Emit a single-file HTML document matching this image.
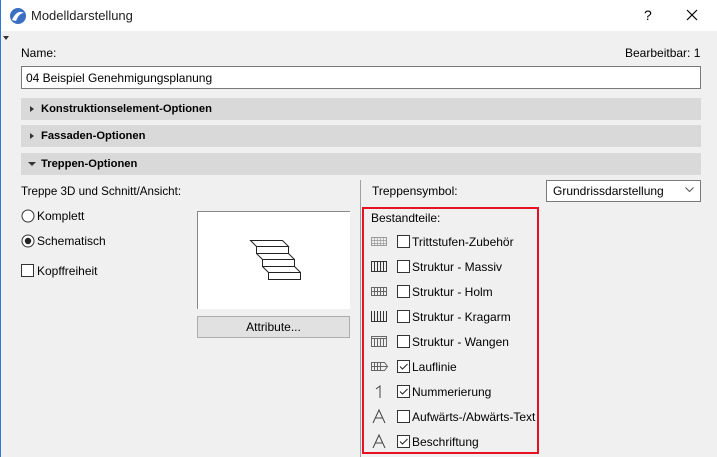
<!DOCTYPE html>
<html><head><meta charset="utf-8"><style>
*{margin:0;padding:0;box-sizing:border-box}
body{width:717px;height:457px;overflow:hidden;background:#f0f0f0;font-family:"Liberation Sans",sans-serif;font-size:12px;color:#000;position:relative}
.a{position:absolute;white-space:nowrap}
.bar{position:absolute;left:21px;width:680px;height:22px;background:#d9d9d9;font-weight:bold;font-size:11.2px;line-height:22px;padding-left:20px}
.cb{position:absolute;width:13px;height:13px;border:1px solid #333;background:#fff}
</style></head><body>
<div class="a" style="left:0;top:0;width:717px;height:31px;background:#fff"></div>
<div class="a" style="left:0;top:0;width:1px;height:457px;background:#2b7bd6"></div>
<svg class="a" style="left:9px;top:7px" width="18" height="18"><circle cx="9" cy="9" r="8" fill="#3a6fc4"/><path d="M3 13 Q8 2 15 6 Q10 6 7 14Z" fill="#fff"/></svg>
<div class="a" style="left:31px;top:8px;font-size:13px;color:#222">Modelldarstellung</div>
<div class="a" style="left:644px;top:7px;font-size:14px">?</div>
<svg class="a" style="left:686px;top:9px" width="12" height="12"><path d="M1 1L11 11M11 1L1 11" stroke="#000" stroke-width="1.2"/></svg>
<div class="a" style="left:3px;top:36px;width:0;height:0;border-left:3px solid transparent;border-right:3px solid transparent;border-top:4px solid #333"></div>
<div class="a" style="left:21px;top:46px">Name:</div>
<div class="a" style="left:625px;top:46px">Bearbeitbar: 1</div>
<div class="a" style="left:21px;top:66px;width:680px;height:23px;background:#fff;border:1px solid #7a7a7a;padding:4px 0 0 4px">04 Beispiel Genehmigungsplanung</div>
<div class="bar" style="top:98px">Konstruktionselement-Optionen</div>
<div class="bar" style="top:125px">Fassaden-Optionen</div>
<div class="bar" style="top:153px">Treppen-Optionen</div>
<div class="a" style="left:30px;top:106px;border-top:3.5px solid transparent;border-bottom:3.5px solid transparent;border-left:4px solid #333"></div>
<div class="a" style="left:30px;top:133px;border-top:3.5px solid transparent;border-bottom:3.5px solid transparent;border-left:4px solid #333"></div>
<div class="a" style="left:28px;top:162px;border-left:4px solid transparent;border-right:4px solid transparent;border-top:4px solid #333"></div>
<div class="a" style="left:21px;top:185px;font-size:11.6px">Treppe 3D und Schnitt/Ansicht:</div>
<svg class="a" style="left:21px;top:209px" width="14" height="14"><circle cx="7" cy="7" r="6" fill="#fff" stroke="#333"/></svg>
<div class="a" style="left:37px;top:209px">Komplett</div>
<svg class="a" style="left:21px;top:234px" width="14" height="14"><circle cx="7" cy="7" r="6" fill="#fff" stroke="#333"/><circle cx="7" cy="7" r="3.2" fill="#222"/></svg>
<div class="a" style="left:37px;top:234px">Schematisch</div>
<div class="cb" style="left:21px;top:264px"></div>
<div class="a" style="left:37px;top:264px">Kopffreiheit</div>
<div class="a" style="left:197px;top:211px;width:153px;height:98px;background:#fff;border-top:1px solid #888;border-left:1px solid #888"></div>
<svg class="a" style="left:245px;top:235px" width="60" height="46"><g fill="none" stroke="#222" stroke-width="1"><path d="M5.5 5.5H37.5L43.5 11.5H11.5ZM11.5 11.5V18.5H43.5V11.5M11.5 18.5L17.5 24.5V31.5H49.5V24.5L43.5 18.5M17.5 24.5H49.5M17.5 31.5L23.5 37.5V44.5H55.5V37.5L49.5 31.5M23.5 37.5H55.5"/></g></svg>
<div class="a" style="left:197px;top:316px;width:153px;height:22px;background:#e1e1e1;border:1px solid #adadad;text-align:center;line-height:20px">Attribute...</div>
<div class="a" style="left:360px;top:180px;width:1px;height:277px;background:#a0a0a0"></div>
<div class="a" style="left:372px;top:184px">Treppensymbol:</div>
<div class="a" style="left:546px;top:180px;width:155px;height:22px;background:#fff;border:1px solid #7a7a7a;padding:3px 0 0 6px">Grundrissdarstellung</div>
<svg class="a" style="left:685px;top:187px" width="9" height="6"><path d="M0.5 0.5L4.5 4.5L8.5 0.5" fill="none" stroke="#555"/></svg>
<div class="a" style="left:362px;top:207px;width:177px;height:247px;border:2px solid #e81123"></div>
<div class="a" style="left:371px;top:211px">Bestandteile:</div>
<svg class="a" style="left:371px;top:232px" width="18" height="220" fill="none" stroke="#333" stroke-width="1">
<g stroke="#999"><rect x="0.5" y="5.5" width="15" height="8"/><path d="M3.5 5v9M6.5 5v9M9.5 5v9M12.5 5v9M0 8.5h16M0 11.5h16" stroke-width="0.7"/></g>
<g transform="translate(0,25)"><rect x="0.5" y="4.5" width="15" height="10"/><path d="M3.5 4v11M6.5 4v11M9.5 4v11M12.5 4v11"/></g>
<g transform="translate(0,50)" stroke="#666"><rect x="0.5" y="5.5" width="15" height="8"/><path d="M3.5 5v9M6.5 5v9M9.5 5v9M12.5 5v9M0 9.5h16"/></g>
<g transform="translate(0,75)"><path d="M0.5 4v10.5h15V4M3.5 4v11M6.5 4v11M9.5 4v11M12.5 4v11"/></g>
<g transform="translate(0,100)" stroke="#666"><rect x="0.5" y="4.5" width="15" height="10"/><path d="M0 6.5h16M3.5 6v8M6.5 6v8M9.5 6v8M12.5 6v8"/></g>
<g transform="translate(0,125)" stroke="#666"><path d="M0.5 5.5h13l3 4-3 4h-13zM3.5 5v9M6.5 5v9M9.5 5v9M0 9.5h16"/></g>
<g transform="translate(0,150)" stroke="#444"><path d="M5 7l4-3v12"/></g>
<g transform="translate(0,175)" stroke="#444"><path d="M2 16L8 3l6 13M4.5 11h7"/></g>
<g transform="translate(0,200)" stroke="#444"><path d="M2 16L8 3l6 13M4.5 11h7"/></g>
</svg>
<div class="cb" style="left:397px;top:235px"></div><div class="a" style="left:412px;top:235px">Trittstufen-Zubehör</div>
<div class="cb" style="left:397px;top:260px"></div><div class="a" style="left:412px;top:260px">Struktur - Massiv</div>
<div class="cb" style="left:397px;top:285px"></div><div class="a" style="left:412px;top:285px">Struktur - Holm</div>
<div class="cb" style="left:397px;top:310px"></div><div class="a" style="left:412px;top:310px">Struktur - Kragarm</div>
<div class="cb" style="left:397px;top:335px"></div><div class="a" style="left:412px;top:335px">Struktur - Wangen</div>
<div class="cb" style="left:397px;top:360px"><svg width="11" height="11" style="display:block"><path d="M2 5.5l2.5 2.5L9.5 3" fill="none" stroke="#222"/></svg></div><div class="a" style="left:412px;top:360px">Lauflinie</div>
<div class="cb" style="left:397px;top:385px"><svg width="11" height="11" style="display:block"><path d="M2 5.5l2.5 2.5L9.5 3" fill="none" stroke="#222"/></svg></div><div class="a" style="left:412px;top:385px">Nummerierung</div>
<div class="cb" style="left:397px;top:410px"></div><div class="a" style="left:412px;top:410px">Aufwärts-/Abwärts-Text</div>
<div class="cb" style="left:397px;top:435px"><svg width="11" height="11" style="display:block"><path d="M2 5.5l2.5 2.5L9.5 3" fill="none" stroke="#222"/></svg></div><div class="a" style="left:412px;top:435px">Beschriftung</div>
</body></html>
